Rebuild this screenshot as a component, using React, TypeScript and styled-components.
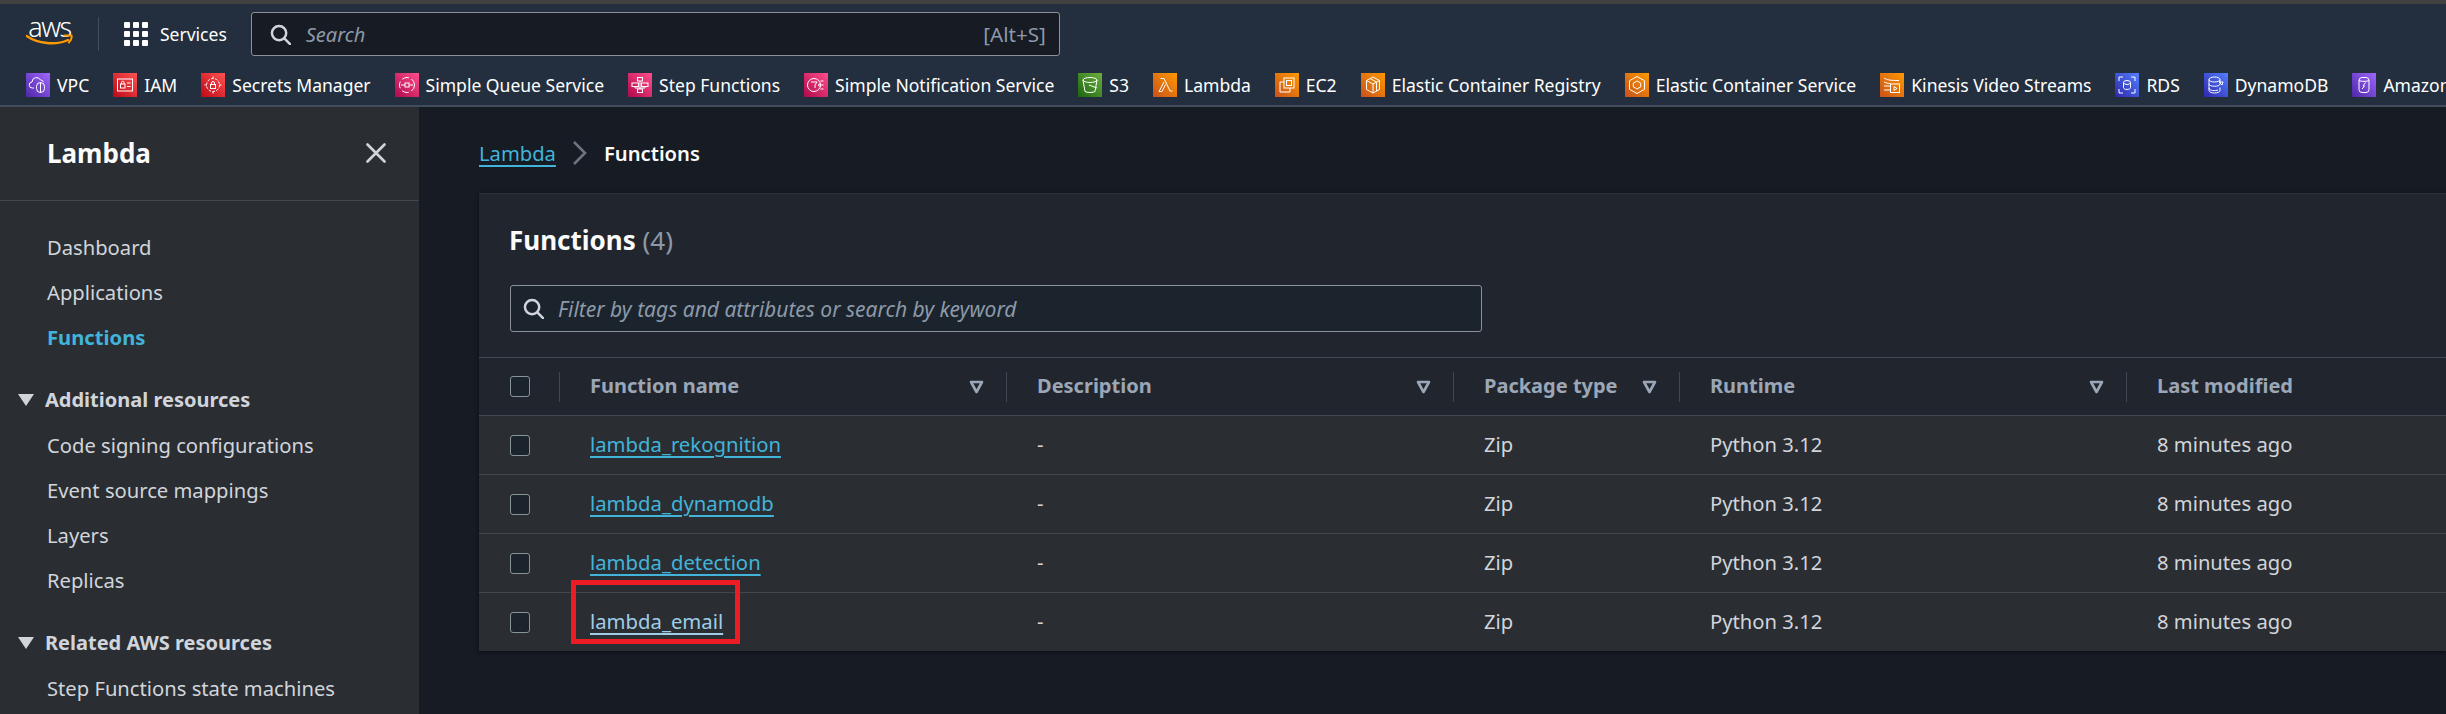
import React from "react";
import styled, { createGlobalStyle } from "styled-components";

const GlobalStyle = createGlobalStyle`
  html, body {
    margin: 0;
    padding: 0;
    background: #161b24;
    overflow: hidden;
  }
  * {
    box-sizing: border-box;
  }
`;

const GRADIENTS: Record<string, string> = {
  purple: "linear-gradient(45deg, #4d27a8, #a166ff)",
  red: "linear-gradient(45deg, #bd0816, #ff5252)",
  pink: "linear-gradient(45deg, #b0084d, #ff4f8b)",
  green: "linear-gradient(45deg, #1b660f, #6cae3e)",
  orange: "linear-gradient(45deg, #c8511b, #ff9900)",
  blue: "linear-gradient(45deg, #2e27ad, #527fff)",
};

const Page = styled.div`
  width: 2446px;
  height: 714px;
  overflow: hidden;
  display: flex;
  flex-direction: column;
  background: #161b24;
  font-family: "Noto Sans", "Open Sans", sans-serif;
  font-size: 20.2px;
  color: #d1d5db;
`;

const TopStrip = styled.div`
  height: 4px;
  background: #414141;
`;

const Header = styled.header`
  height: 103px;
  flex: none;
  background: #232f3e;
  border-bottom: 2px solid #414d5c;
  padding: 8px 0 0 26px;
  display: flex;
  flex-direction: column;
`;

const TopRow = styled.div`
  height: 44px;
  display: flex;
  align-items: center;
`;

const LogoBlock = styled.div`
  width: 47px;
  height: 34px;
  display: flex;
  flex-direction: column;
  align-items: center;
  color: #fff;
`;

const LogoText = styled.span`
  font-size: 27px;
  font-weight: 300;
  line-height: 20px;
  height: 17px;
  letter-spacing: -1.5px;
`;

const HeaderDivider = styled.div`
  width: 1px;
  height: 34px;
  background: #414d5c;
  margin: 0 25px 0 25px;
`;

const ServicesLabel = styled.span`
  color: #fff;
  margin-left: 12px;
  margin-right: 24px;
  font-size: 17.5px;
`;

const SearchBox = styled.div`
  width: 809px;
  height: 44px;
  display: flex;
  align-items: center;
  background: #161b24;
  border: 1px solid #8c9198;
  border-radius: 3px;
  padding: 0 13px 0 18px;
`;

const SearchHint = styled.span`
  flex: 1;
  margin-left: 15px;
  font-style: italic;
  font-size: 20px;
  color: #8d99a8;
`;

const Shortcut = styled.span`
  color: #8d99a8;
  font-size: 20.6px;
`;

const Bookmarks = styled.nav`
  margin-top: 17px;
  height: 24px;
  display: flex;
  align-items: center;
  gap: 24px;
  white-space: nowrap;
`;

const Bookmark = styled.a`
  display: flex;
  align-items: center;
  gap: 7px;
  color: #fff;
  font-size: 17.55px;
`;

const ServiceTile = styled.span<{ $tone: string }>`
  width: 24px;
  height: 24px;
  flex: none;
  display: flex;
  background: ${({ $tone }) => GRADIENTS[$tone]};
`;

const Body = styled.div`
  flex: 1;
  display: flex;
  min-height: 0;
`;

const Sidebar = styled.aside`
  width: 419px;
  flex: none;
  background: #2a2e33;
`;

const SidebarHeader = styled.div`
  height: 94px;
  border-bottom: 1px solid #414750;
  padding: 0 33px 2px 47px;
  display: flex;
  align-items: center;
  justify-content: space-between;
`;

const SidebarTitle = styled.h2`
  margin: 0;
  font-size: 26px;
  font-weight: 700;
  color: #fbfbfb;
`;

const SideNav = styled.nav`
  padding-top: 23px;
`;

const NavItem = styled.a<{ $active?: boolean }>`
  display: flex;
  align-items: center;
  height: 45px;
  padding-left: 47px;
  color: ${({ $active }) => ($active ? "#42b4d9" : "#d1d5db")};
  font-weight: ${({ $active }) => ($active ? 700 : 400)};
`;

const NavSection = styled.div`
  display: flex;
  align-items: center;
  height: 45px;
  margin-top: 18px;
  padding-left: 18px;
  gap: 11px;
  color: #d1d5db;
  font-size: 20px;
  font-weight: 700;
  & + ${NavItem} {
    margin-top: 0;
  }
`;

const SectionCaret = styled.span`
  width: 0;
  height: 0;
  border-left: 8px solid transparent;
  border-right: 8px solid transparent;
  border-top: 12px solid #d1d5db;
`;

const Main = styled.main`
  flex: 1;
  min-width: 0;
  padding: 27px 0 0 60px;
`;

const Breadcrumbs = styled.div`
  height: 38px;
  display: flex;
  align-items: center;
  gap: 16px;
`;

const CrumbLink = styled.a`
  color: #42b4d9;
  text-decoration: underline;
  text-decoration-thickness: 2px;
  text-underline-offset: 4px;
`;

const CrumbCurrent = styled.span`
  color: #fbfbfb;
  font-weight: 600;
  margin-left: 1px;
`;

const Card = styled.section`
  margin-top: 21px;
  background: #21262e;
  border-top: 1px solid #2c3138;
  box-shadow: 0 1px 4px rgba(0, 0, 0, 0.5);
`;

const CardHead = styled.div`
  padding: 27px 31px 25px;
`;

const CardTitle = styled.h2`
  margin: 0 0 0 -1px;
  height: 38px;
  line-height: 38px;
  font-size: 26px;
  font-weight: 700;
  color: #fbfbfb;
`;

const Count = styled.span`
  font-weight: 400;
  color: #8d99a8;
`;

const FilterBox = styled.div`
  margin-top: 26px;
  width: 972px;
  height: 47px;
  display: flex;
  align-items: center;
  gap: 14px;
  padding: 0 12px;
  background: #1b232d;
  border: 1px solid #8c9198;
  border-radius: 3px;
  font-style: italic;
  font-size: 21px;
  color: #8d99a8;
`;

const Row = styled.div<{ $head?: boolean }>`
  display: grid;
  grid-template-columns: 80px 447px 447px 226px 447px 1fr;
  height: ${({ $head }) => ($head ? "58px" : "59px")};
  align-items: center;
  border-top: 1px solid #414750;
  background: ${({ $head }) => ($head ? "#21262e" : "#2a2e33")};
`;

const Cell = styled.div`
  position: relative;
  padding-left: 31px;
  padding-bottom: 2px;
  display: flex;
  align-items: center;
`;

const CheckCell = styled.div`
  padding-left: 31px;
  display: flex;
  align-items: center;
`;

const HeadCell = styled.div`
  height: 30px;
  display: flex;
  align-items: center;
  justify-content: space-between;
  padding: 0 22px 0 30px;
  border-left: 1px solid #414750;
  color: #9ba7b6;
  font-size: 20px;
  font-weight: 700;
`;

const HeadLabel = styled.span`
  margin-top: -2px;
`;

const CheckBox = styled.span`
  width: 20px;
  height: 21px;
  background: #1b232d;
  border: 1px solid #879596;
  border-radius: 3px;
`;

const FunctionLink = styled.a<{ $visited?: boolean }>`
  color: ${({ $visited }) => ($visited ? "#9fcde6" : "#42b4d9")};
  font-size: 20.3px;
  text-decoration: underline;
  text-decoration-thickness: 2px;
  text-underline-offset: 4px;
`;

const HighlightBox = styled.span`
  position: absolute;
  left: 12px;
  top: -27px;
  width: 169px;
  height: 64px;
  border: 5px solid #ed1c24;
`;

const SearchIcon = ({ size, color }: { size: number; color: string }) => (
  <svg width={size} height={size} viewBox="0 0 22 22" fill="none" stroke={color} strokeWidth="2.6">
    <circle cx="9.5" cy="9.5" r="7.5" />
    <path d="M15 15l6 6" strokeLinecap="round" />
  </svg>
);

const SortIcon = () => (
  <svg width="15" height="14" viewBox="0 0 15 14" fill="none" stroke="#9ba7b6" strokeWidth="2.6">
    <path d="M2 2h11L7.5 12z" strokeLinejoin="round" />
  </svg>
);

const ServicesGrid = () => (
  <svg width="24" height="24" viewBox="0 0 24 24" fill="#fff">
    {[0, 9, 18].map((y) =>
      [0, 9, 18].map((x) => <rect key={`${x}-${y}`} x={x} y={y} width="6" height="6" rx="1" />)
    )}
  </svg>
);

const Smile = () => (
  <svg width="47" height="12" viewBox="0 0 47 12" fill="none">
    <path d="M0.5 2C12 10 30 11.5 42 6" stroke="#ff9900" strokeWidth="2.4" strokeLinecap="round" />
    <path d="M38 1.5h7.5c.6 2.2-.6 5-2.6 7" stroke="#ff9900" strokeWidth="2" strokeLinecap="round" fill="none" />
  </svg>
);

const CloseIcon = () => (
  <svg width="20" height="20" viewBox="0 0 20 20" stroke="#d1d5db" strokeWidth="2.6" strokeLinecap="round">
    <path d="M1.5 1.5l17 17M18.500 1.500l-17 17" />
  </svg>
);

const Chevron = () => (
  <svg width="15" height="26" viewBox="0 0 15 26" fill="none" stroke="#6b7480" strokeWidth="2.6">
    <path d="M2 2l11 11L2 24" />
  </svg>
);

// white line drawings inside the coloured service tiles, on a 24 unit grid
const ICONS: Record<string, React.ReactNode> = {
  vpc: (
    <>
      <path d="M8 15H6.5a3 3 0 0 1-.5-6 4.5 4.5 0 0 1 8.5-2 3 3 0 0 1 3 2" />
      <rect x="10.5" y="9.5" width="8" height="10" rx="4" />
      <path d="M14.5 9.5v10" />
    </>
  ),
  iam: (
    <>
      <rect x="4.5" y="6" width="15" height="12" />
      <rect x="7.5" y="11" width="4.5" height="4" />
      <path d="M8.5 11V9.5a1.3 1.3 0 0 1 2.6 0V11M14 10h3.5M14 13.5h3.5" />
    </>
  ),
  secrets: (
    <>
      <circle cx="12" cy="12" r="6.5" strokeDasharray="2.5 1.5" />
      <rect x="9.5" y="11.5" width="5" height="4" />
      <path d="M10.5 11.5V10a1.5 1.5 0 0 1 3 0v1.5M12 3.5v2M12 18.5v2M3.5 12h2M18.5 12h2" />
    </>
  ),
  sqs: (
    <>
      <circle cx="12" cy="12" r="7.5" strokeDasharray="7 3" />
      <rect x="10" y="10" width="4" height="4" />
      <path d="M6 12h4M14 12h4" />
    </>
  ),
  step: (
    <>
      <rect x="9.5" y="4.5" width="5" height="3.5" />
      <rect x="4" y="10" width="6.5" height="3.5" />
      <rect x="13.5" y="10" width="6.5" height="3.5" />
      <rect x="9.5" y="16" width="5" height="3.5" />
      <path d="M12 8v8M7 13.5V15h10v-1.5" />
    </>
  ),
  sns: (
    <>
      <circle cx="10" cy="12" r="6.5" />
      <path d="M7 9h6l-2 3v3M16.5 8h3M16.5 12h3M16.5 16h3" />
      <circle cx="15.5" cy="12" r="1" />
    </>
  ),
  s3: (
    <>
      <ellipse cx="12" cy="7" rx="7" ry="2.5" />
      <path d="M5 7l2 11.5c1.5 1.3 8.5 1.3 10 0L19 7M11 12l8 3" />
    </>
  ),
  lambda: <path d="M7.5 5.5h3.5l6 12.5h2.5M11 9l-5 9.5h3l3.5-7" strokeLinejoin="round" />,
  ec2: (
    <>
      <rect x="9" y="5" width="10" height="10" />
      <rect x="11.5" y="7.5" width="5" height="5" />
      <path d="M9 9H5v10h10v-4" />
    </>
  ),
  ecr: (
    <>
      <path d="M12 4l6.5 3.5v9L12 20l-6.5-3.5v-9z" />
      <path d="M5.5 7.5L12 11v9M12 11l6.5-3.5M9 5.5l6.5 3.5v9" />
    </>
  ),
  ecs: (
    <>
      <path d="M12 3.5l7.5 4.2v8.6L12 20.5l-7.5-4.2V7.7z" />
      <path d="M12 8l3.7 2.1v3.8L12 16l-3.7-2.1v-3.8z" />
    </>
  ),
  kinesis: (
    <>
      <rect x="10.5" y="11" width="9" height="8.5" />
      <path d="M4 5c3 2 6 2.5 15 2.5M4 9c2 1 4 1.500 6.500 1.500M4 13h6.500M4 17h6.500M14 13.500v4l3-2z" />
    </>
  ),
  rds: (
    <>
      <ellipse cx="12" cy="9.500" rx="3.500" ry="2" />
      <path d="M8.500 9.500v5c0 2.600 7 2.600 7 0v-5M4 8V4h4M16 4h4v4M20 16v4h-4M8 20H4v-4" />
    </>
  ),
  dynamo: (
    <>
      <ellipse cx="10.500" cy="6.500" rx="5.500" ry="2.500" />
      <path d="M5 6.500v11c0 3.300 11 3.300 11 0v-3M5 11c0 3 11 3 11 0M5 15c0 3 7 3 9 2M16 6.500v4M19 9h-4l3 3z" />
    </>
  ),
  amazon: (
    <>
      <rect x="7" y="4.500" width="10" height="15" rx="3" />
      <path d="M7 7.500c2 1.200 8 1.200 10 0M10 16l2.500-3H11l2.500-3.500" />
    </>
  ),
};

const BOOKMARKS = [
  { label: "VPC", icon: "vpc", tone: "purple" },
  { label: "IAM", icon: "iam", tone: "red" },
  { label: "Secrets Manager", icon: "secrets", tone: "red" },
  { label: "Simple Queue Service", icon: "sqs", tone: "pink" },
  { label: "Step Functions", icon: "step", tone: "pink" },
  { label: "Simple Notification Service", icon: "sns", tone: "pink" },
  { label: "S3", icon: "s3", tone: "green" },
  { label: "Lambda", icon: "lambda", tone: "orange" },
  { label: "EC2", icon: "ec2", tone: "orange" },
  { label: "Elastic Container Registry", icon: "ecr", tone: "orange" },
  { label: "Elastic Container Service", icon: "ecs", tone: "orange" },
  { label: "Kinesis Video Streams", icon: "kinesis", tone: "orange" },
  { label: "RDS", icon: "rds", tone: "blue" },
  { label: "DynamoDB", icon: "dynamo", tone: "blue" },
  { label: "Amazon", icon: "amazon", tone: "purple" },
];

const COLUMNS = [
  { label: "Function name", sortable: true },
  { label: "Description", sortable: true },
  { label: "Package type", sortable: true },
  { label: "Runtime", sortable: true },
  { label: "Last modified", sortable: false },
];

const FUNCTIONS = ["lambda_rekognition", "lambda_dynamodb", "lambda_detection", "lambda_email"];

const App: React.FC = () => (
  <Page>
    <GlobalStyle />
    <TopStrip />
    <Header>
      <TopRow>
        <LogoBlock>
          <LogoText>aws</LogoText>
          <Smile />
        </LogoBlock>
        <HeaderDivider />
        <ServicesGrid />
        <ServicesLabel>Services</ServicesLabel>
        <SearchBox>
          <SearchIcon size={21} color="#d1d5db" />
          <SearchHint>Search</SearchHint>
          <Shortcut>[Alt+S]</Shortcut>
        </SearchBox>
      </TopRow>
      <Bookmarks>
        {BOOKMARKS.map(({ label, icon, tone }) => (
          <Bookmark key={label}>
            <ServiceTile $tone={tone}>
              <svg width="24" height="24" viewBox="0 0 24 24" fill="none" stroke="#fff" strokeWidth="1">
                {ICONS[icon]}
              </svg>
            </ServiceTile>
            {label}
          </Bookmark>
        ))}
      </Bookmarks>
    </Header>
    <Body>
      <Sidebar>
        <SidebarHeader>
          <SidebarTitle>Lambda</SidebarTitle>
          <CloseIcon />
        </SidebarHeader>
        <SideNav>
          <NavItem>Dashboard</NavItem>
          <NavItem>Applications</NavItem>
          <NavItem $active>Functions</NavItem>
          <NavSection>
            <SectionCaret />
            Additional resources
          </NavSection>
          <NavItem>Code signing configurations</NavItem>
          <NavItem>Event source mappings</NavItem>
          <NavItem>Layers</NavItem>
          <NavItem>Replicas</NavItem>
          <NavSection>
            <SectionCaret />
            Related AWS resources
          </NavSection>
          <NavItem>Step Functions state machines</NavItem>
        </SideNav>
      </Sidebar>
      <Main>
        <Breadcrumbs>
          <CrumbLink>Lambda</CrumbLink>
          <Chevron />
          <CrumbCurrent>Functions</CrumbCurrent>
        </Breadcrumbs>
        <Card>
          <CardHead>
            <CardTitle>
              Functions <Count>(4)</Count>
            </CardTitle>
            <FilterBox>
              <SearchIcon size={21} color="#d1d5db" />
              Filter by tags and attributes or search by keyword
            </FilterBox>
          </CardHead>
          <Row $head>
            <CheckCell>
              <CheckBox />
            </CheckCell>
            {COLUMNS.map(({ label, sortable }) => (
              <HeadCell key={label}>
                <HeadLabel>{label}</HeadLabel>
                {sortable && <SortIcon />}
              </HeadCell>
            ))}
          </Row>
          {FUNCTIONS.map((name) => (
            <Row key={name}>
              <CheckCell>
                <CheckBox />
              </CheckCell>
              <Cell>
                <FunctionLink $visited={name === "lambda_email"}>{name}</FunctionLink>
                {name === "lambda_email" && <HighlightBox />}
              </Cell>
              <Cell>-</Cell>
              <Cell>Zip</Cell>
              <Cell>Python 3.12</Cell>
              <Cell>8 minutes ago</Cell>
            </Row>
          ))}
        </Card>
      </Main>
    </Body>
  </Page>
);

export default App;
